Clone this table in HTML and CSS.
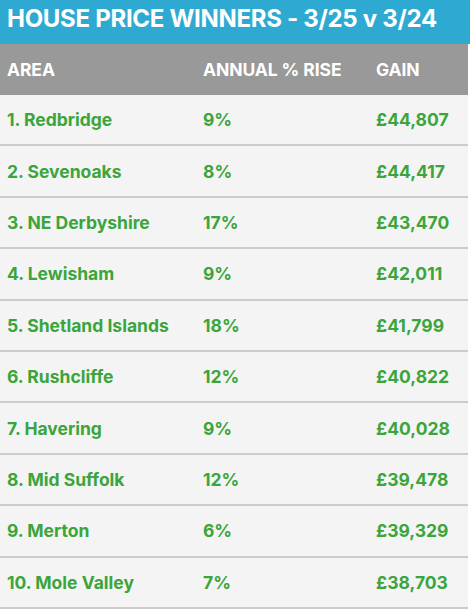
FILE: index.html
```html
<!DOCTYPE html>
<html>
<head>
<meta charset="utf-8">
<link rel="stylesheet" href="styles.css">
</head>
<body>
<div class="card">
  <div class="title">HOUSE PRICE WINNERS - 3/25 v 3/24</div>
  <div class="table">
    <div class="row head"><div>AREA</div><div>ANNUAL % RISE</div><div>GAIN</div></div>
    <div class="row"><div>1. Redbridge</div><div>9%</div><div>£44,807</div></div>
    <div class="row"><div>2. Sevenoaks</div><div>8%</div><div>£44,417</div></div>
    <div class="row"><div>3. NE Derbyshire</div><div>17%</div><div>£43,470</div></div>
    <div class="row"><div>4. Lewisham</div><div>9%</div><div>£42,011</div></div>
    <div class="row"><div>5. Shetland Islands</div><div>18%</div><div>£41,799</div></div>
    <div class="row"><div>6. Rushcliffe</div><div>12%</div><div>£40,822</div></div>
    <div class="row"><div>7. Havering</div><div>9%</div><div>£40,028</div></div>
    <div class="row"><div>8. Mid Suffolk</div><div>12%</div><div>£39,478</div></div>
    <div class="row"><div>9. Merton</div><div>6%</div><div>£39,329</div></div>
    <div class="row"><div>10. Mole Valley</div><div>7%</div><div>£38,703</div></div>
  </div>
</div>
</body>
</html>
```
FILE: styles.css
```css
html, body { margin: 0; padding: 0; background: #ffffff; }
body { font-family: Inter, "Open Sans", sans-serif; }
.card { width: 470px; }
.title {
  background: #2eaad2;
  color: #ffffff;
  font-weight: 700;
  font-size: 24px;
  height: 44px;
  line-height: 38px;
  padding-left: 7px;
  letter-spacing: -0.3px;
  white-space: nowrap;
  box-sizing: border-box;
}
.table { width: 468px; }
.row {
  display: grid;
  grid-template-columns: 196px 173px 1fr;
  align-items: center;
  height: 51.4px;
  box-sizing: border-box;
  background: #f4f4f4;
  color: #3ba53b;
  font-weight: 700;
  font-size: 17.5px;
  border-bottom: 2px solid #cccccc;
  white-space: nowrap;
}
.row > div { padding-left: 7px; }
.row.head {
  background: #999999;
  color: #ffffff;
  height: 51px;
  border-bottom: none;
  font-size: 17.5px;
  letter-spacing: -0.1px;
}
```
